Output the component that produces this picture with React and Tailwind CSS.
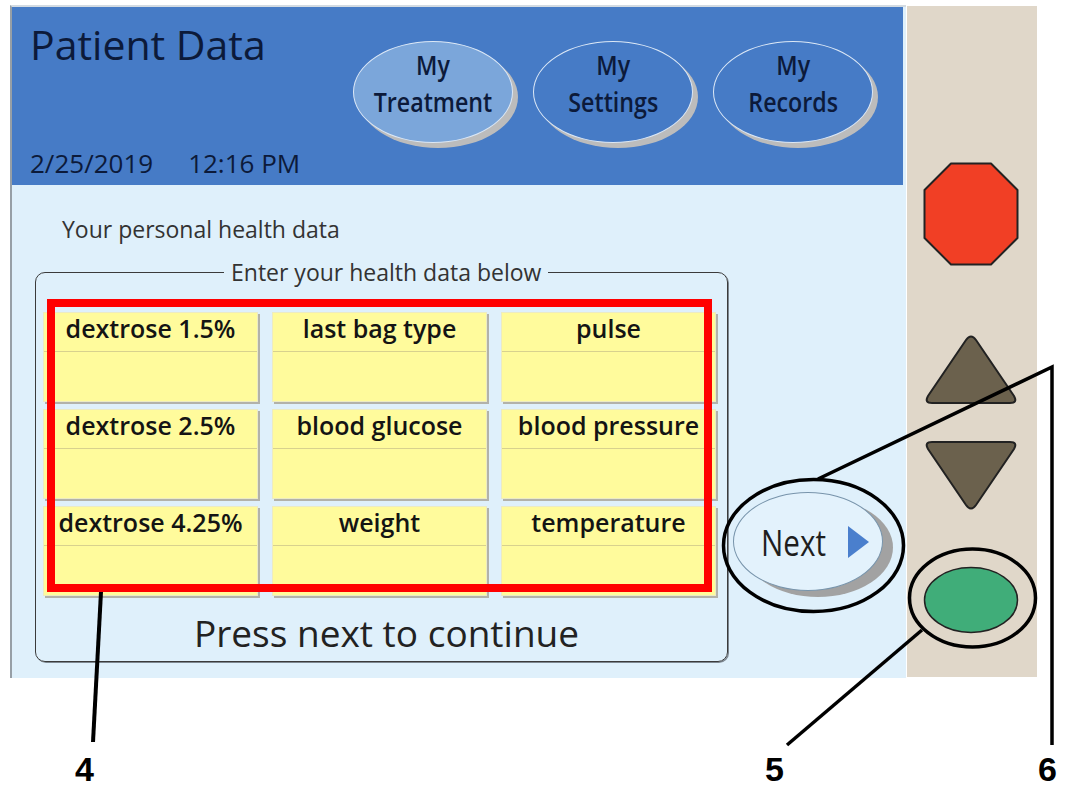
import React from "react";

const tiles = [
  "dextrose 1.5%",
  "last bag type",
  "pulse",
  "dextrose 2.5%",
  "blood glucose",
  "blood pressure",
  "dextrose 4.25%",
  "weight",
  "temperature",
];

function TabOval({ top, bottom, active }) {
  return (
    <div
      className={
        active
          ? "flex h-[102px] w-[160px] flex-col items-center rounded-[50%] border border-[#dce8f6] bg-[#7ba6da] pt-[4px] shadow-[5px_5px_0_#bcbcbc]"
          : "flex h-[102px] w-[160px] flex-col items-center rounded-[50%] border border-[#dce8f6] bg-[#467bc6] pt-[4px] shadow-[5px_5px_0_#bcbcbc]"
      }
    >
      <span className="block scale-x-[0.86] whitespace-nowrap text-center text-[27px] font-semibold leading-[37px]">
        {top}
        <br />
        {bottom}
      </span>
    </div>
  );
}

function Tile({ label }) {
  return (
    <div className="h-[90px] border border-[#ecebc4] bg-[#fffb9c] shadow-[2px_2px_0_#b2b2aa]">
      <div className="h-[39px] whitespace-nowrap border-b border-[#d8d18e] text-center text-[25px] font-semibold leading-[31px] text-[#141414]">
        {label}
      </div>
    </div>
  );
}

export default function App() {
  return (
    <div className="relative h-[789px] w-[1066px] overflow-hidden bg-white font-['Open_Sans',sans-serif]">
      <div className="flex pl-[10px] pt-[5px]">
        {/* Screen */}
        <div className="flex h-[673px] w-[896px] flex-col border-l-2 border-t-2 border-l-[#979fa6] border-t-[#d3dbe2] bg-[#dff0fb]">
          <header className="mr-[3px] flex h-[178px] shrink-0 bg-[#467bc6] text-[#0c1a3a]">
            <div className="flex w-[341px] flex-col justify-between pb-[9px] pl-[18px] pt-[17px]">
              <h1 className="text-[41px] leading-[40px]">Patient Data</h1>
              <div className="whitespace-nowrap text-[26px] font-medium leading-[25px]">
                <span>2/25/2019</span>
                <span className="ml-[35px]">12:16 PM</span>
              </div>
            </div>
            <nav className="flex gap-[20px] pt-[34px]">
              <TabOval top="My" bottom="Treatment" active />
              <TabOval top="My" bottom="Settings" />
              <TabOval top="My" bottom="Records" />
            </nav>
          </header>

          <div className="flex flex-col pl-[23px]">
            <p className="mt-[33px] pl-[27px] text-[23px] leading-[22px] text-[#333]">Your personal health data</p>
            <div className="mt-[21px] flex items-start">
              <fieldset className="m-0 w-[693px] rounded-[10px] border border-[#3b3b3b] p-0 shadow-[1px_1px_0_#7d8790]">
                <legend className="ml-[188px] px-[7px] text-[23px] leading-[22px] text-[#333]">
                  Enter your health data below
                </legend>
                <div className="mt-[29px] grid grid-cols-[215px_215px_215px] gap-x-[14px] gap-y-[7px] pl-[7px]">
                  {tiles.map((t) => (
                    <Tile key={t} label={t} />
                  ))}
                </div>
                <p className="mt-[19px] pb-[10px] pl-[10px] text-center text-[37px] leading-[36px] text-[#222]">
                  Press next to continue
                </p>
              </fieldset>
              <button className="ml-[5px] mt-[231px] flex h-[99px] w-[150px] items-center rounded-[50%] border border-[#7894ab] bg-[#e3f2fc] pl-[27px] shadow-[10px_6px_0_#a2a2a2]">
                <span className="w-[65px] origin-left scale-x-[0.8] whitespace-nowrap text-left text-[37px] leading-[37px] text-[#1e1e1e]">
                  Next
                </span>
                <svg className="ml-[22px]" width="21" height="32" viewBox="0 0 21 32">
                  <path d="M0 0 L21 16 L0 32 Z" fill="#4a7fcd" />
                </svg>
              </button>
            </div>
          </div>
        </div>

        {/* Hardware button panel */}
        <div className="ml-[1px] mt-[1px] flex h-[671px] w-[130px] flex-col items-center bg-[#e0d7c9] pr-[2px]">
          <svg className="mt-[156px]" width="96" height="104" viewBox="0 0 96 104">
            <polygon
              points="28,1.5 68,1.5 94.5,28 94.5,76 68,102.5 28,102.5 1.5,76 1.5,28"
              fill="#f13f25"
              stroke="#222"
              strokeWidth="2"
              strokeLinejoin="round"
            />
          </svg>
          <svg className="mt-[67px]" width="96" height="72" viewBox="0 0 96 72">
            <path
              d="M43,7 Q48,0 53,7 L91,63 Q95,70 87,70 L9,70 Q1,70 5,63 Z"
              fill="#6b614d"
              stroke="#222"
              strokeWidth="2"
            />
          </svg>
          <svg className="mt-[35px]" width="96" height="72" viewBox="0 0 96 72">
            <path
              d="M9,2 L87,2 Q95,2 91,9 L53,65 Q48,72 43,65 L5,9 Q1,2 9,2 Z"
              fill="#6b614d"
              stroke="#222"
              strokeWidth="2"
            />
          </svg>
          <svg className="mt-[54px]" width="96" height="68" viewBox="0 0 96 68">
            <ellipse cx="48" cy="34" rx="46.5" ry="32.5" fill="#40ad79" stroke="#222" strokeWidth="1.5" />
          </svg>
        </div>
      </div>

      {/* Annotation overlay */}
      <svg className="pointer-events-none absolute left-0 top-0" width="1066" height="789" viewBox="0 0 1066 789">
        <rect x="51" y="303" width="657" height="285" fill="none" stroke="#ff0000" strokeWidth="8" />
        <line x1="101" y1="592" x2="93" y2="742" stroke="#000" strokeWidth="4" />
        <ellipse cx="813.5" cy="545.5" rx="90" ry="66" fill="none" stroke="#000" strokeWidth="3.5" />
        <polyline points="818,479 1052,367 1052,745" fill="none" stroke="#000" strokeWidth="3.5" />
        <ellipse cx="972.5" cy="598" rx="63" ry="49" fill="none" stroke="#000" strokeWidth="3.5" />
        <line x1="922" y1="630" x2="787" y2="745" stroke="#000" strokeWidth="3.5" />
      </svg>
      <span className="absolute left-[75px] top-[752px] font-['Liberation_Sans',Arial,sans-serif] text-[34px] font-bold leading-[34px] text-black">
        4
      </span>
      <span className="absolute left-[765px] top-[752px] font-['Liberation_Sans',Arial,sans-serif] text-[34px] font-bold leading-[34px] text-black">
        5
      </span>
      <span className="absolute left-[1038px] top-[752px] font-['Liberation_Sans',Arial,sans-serif] text-[34px] font-bold leading-[34px] text-black">
        6
      </span>
    </div>
  );
}
